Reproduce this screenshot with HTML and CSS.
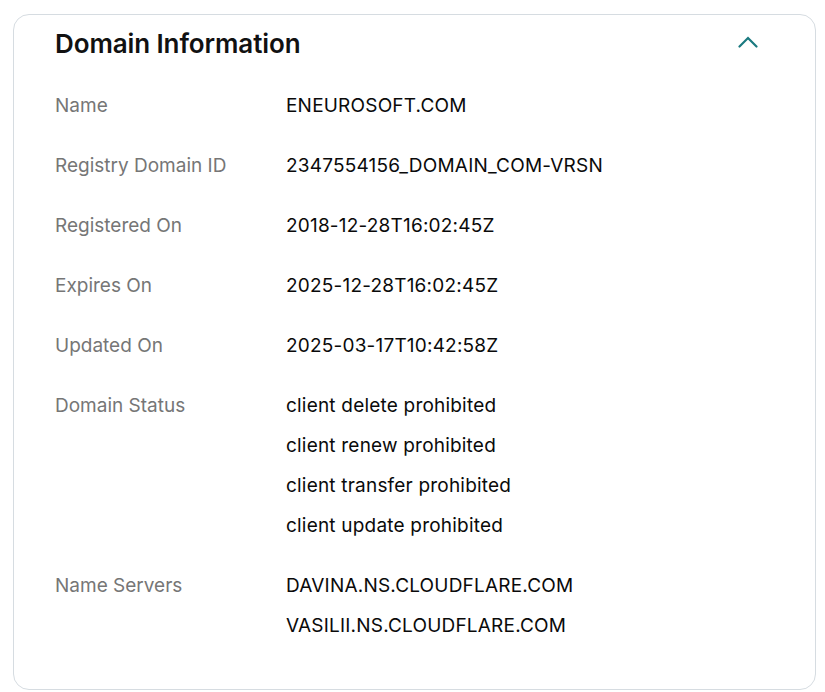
FILE: index.html
```html
<!DOCTYPE html>
<html>
<head>
<meta charset="utf-8">
<link rel="stylesheet" href="styles.css">
</head>
<body>
<section class="card">
  <header class="card-header">
    <h2 class="title">Domain Information</h2>
    <button class="toggle" aria-label="Collapse">
      <svg width="20" height="12" viewBox="0 0 20 12"><path d="M1.5 10.5 L10 2 L18.5 10.5" fill="none" stroke="#1b7a80" stroke-width="2.2" stroke-linecap="round" stroke-linejoin="miter"/></svg>
    </button>
  </header>
  <dl class="info">
    <div class="row"><dt>Name</dt><dd>ENEUROSOFT.COM</dd></div>
    <div class="row"><dt>Registry Domain ID</dt><dd>2347554156_DOMAIN_COM-VRSN</dd></div>
    <div class="row"><dt>Registered On</dt><dd>2018-12-28T16:02:45Z</dd></div>
    <div class="row"><dt>Expires On</dt><dd>2025-12-28T16:02:45Z</dd></div>
    <div class="row"><dt>Updated On</dt><dd>2025-03-17T10:42:58Z</dd></div>
    <div class="row"><dt>Domain Status</dt><dd><span>client delete prohibited</span><span>client renew prohibited</span><span>client transfer prohibited</span><span>client update prohibited</span></dd></div>
    <div class="row"><dt>Name Servers</dt><dd><span>DAVINA.NS.CLOUDFLARE.COM</span><span>VASILII.NS.CLOUDFLARE.COM</span></dd></div>
  </dl>
</section>
</body>
</html>
```

FILE: styles.css
```css
html, body {
  margin: 0;
  padding: 0;
  background: #ffffff;
}
body {
  padding: 14px 9px 0 13px;
  font-family: "Inter", "Liberation Sans", sans-serif;
  color: #111111;
}
.card {
  border: 1px solid #d6dce1;
  border-radius: 16px;
  padding: 0 0 43px 41px;
  box-sizing: border-box;
  height: 676px;
}
.card-header {
  display: flex;
  align-items: center;
  justify-content: space-between;
  height: 57px;
  padding-right: 56px;
}
.title {
  margin: 0;
  font-size: 26px;
  font-weight: 600;
  letter-spacing: -0.1px;
  color: #111111;
}
.toggle {
  border: 0;
  background: none;
  padding: 0;
  width: 22px;
  height: 22px;
  display: flex;
  align-items: center;
  justify-content: center;
  margin-top: -3px;
}
.info {
  margin: 14px 0 0;
  display: flex;
  flex-direction: column;
  gap: 20px;
}
.row {
  display: grid;
  grid-template-columns: 231px 1fr;
}
.row dt {
  font-size: 19px;
  line-height: 40px;
  color: #767676;
}
.row dd {
  margin: 0;
  font-size: 19px;
  line-height: 40px;
  letter-spacing: 0.2px;
  font-weight: 400;
  color: #0a0a0a;
  display: flex;
  flex-direction: column;
}
```
